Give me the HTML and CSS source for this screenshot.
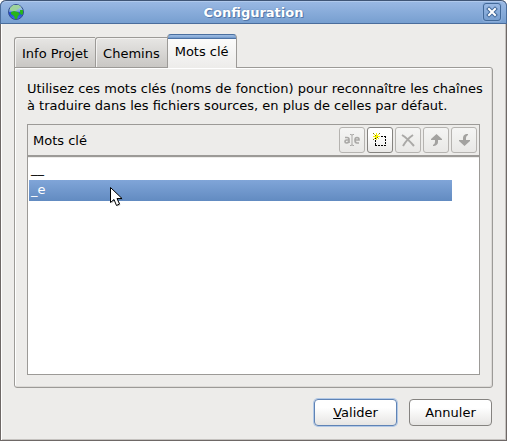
FILE: index.html
```html
<!DOCTYPE html>
<html lang="fr">
<head>
<meta charset="utf-8">
<title>Configuration</title>
<link rel="stylesheet" href="styles.css">
</head>
<body>
<div class="window">
  <header class="titlebar">
    <svg class="globe" width="18" height="18" viewBox="0 0 18 18" aria-hidden="true">
      <defs>
        <linearGradient id="sea" x1="0" y1="0" x2="0" y2="1">
          <stop offset="0" stop-color="#c3e0d8"/>
          <stop offset="0.45" stop-color="#7da9dd"/>
          <stop offset="0.55" stop-color="#1c43d8"/>
          <stop offset="1" stop-color="#4574ee"/>
        </linearGradient>
      </defs>
      <circle cx="9" cy="9" r="7.5" fill="url(#sea)" stroke="#33508e"/>
      <path d="M3 5l3-3h6l2 2-3 2-2 2H5L3 7z" fill="#9ed39c"/>
      <path d="M4 9l3-1 4 1 2 2-2 2-1 3H8l-1-3-3-2z" fill="#27b51c"/>
      <path d="M13 7l3 0v4l-2 1-1-2z" fill="#27b51c"/>
    </svg>
    <h1>Configuration</h1>
    <button class="close" type="button" aria-label="Fermer">
      <svg width="12" height="12" viewBox="0 0 12 12">
        <path d="M3 3l6 6M9 3L3 9" stroke="#426999" stroke-width="4" stroke-linecap="square"/>
        <path d="M3 3l6 6M9 3L3 9" stroke="#fff" stroke-width="2" stroke-linecap="square"/>
      </svg>
    </button>
  </header>

  <main class="content">
    <div class="tabs" role="tablist">
      <button class="tab" type="button" role="tab">Info Projet</button>
      <button class="tab" type="button" role="tab">Chemins</button>
      <button class="tab active" type="button" role="tab" aria-selected="true">Mots clé</button>
    </div>

    <section class="panel" role="tabpanel">
      <p>Utilisez ces mots clés (noms de fonction) pour reconnaître les chaînes<br>
      à traduire dans les fichiers sources, en plus de celles par défaut.</p>
      <div class="listbox">
        <div class="toolbar">
          <span id="list-label">Mots clé</span>
          <button class="tool" type="button" aria-label="Modifier" disabled>
            <svg width="18" height="18" viewBox="0 0 18 18" fill="none" stroke="#aaa9a7">
              <path d="M2 6.500h2q2 0 2 2V12M6 9H3.500Q2 9 2 10.500T3.500 12q1.500 0 2.500-1.500M12 9h4Q16 6.500 14 6.500T12 9Q12 12 14 12h2" stroke-width="1.700"/>
              <path d="M7 3.500h1q1 0 1 1v9q0 1-1 1H7M11 3.500h-1q-1 0-1 1M11 14.500h-1q-1 0-1-1"/>
            </svg>
          </button>
          <button class="tool" type="button" aria-label="Nouveau">
            <svg width="18" height="18" viewBox="0 0 18 18" shape-rendering="crispEdges">
              <path d="M4 5.500h11M14.500 5v10M4 14.500h11M4.500 6v9" fill="none" stroke="#000" stroke-dasharray="2 1"/>
              <path d="M5 2h1v2H5zM5 6h1v3H5zM2 5h7v1H2zM3 3h1v1H3zM7 3h1v1H7zM4 4h3v3H4zM7 7h1v1H7zM3 7h1v1H3z" fill="#f7f100"/>
              <path d="M2 2h1v1H2zM8 2h1v1H8zM4 4h1v1H4zM6 6h1v1H6zM2 8h1v1H2z" fill="#77731a"/>
            </svg>
          </button>
          <button class="tool" type="button" aria-label="Supprimer" disabled>
            <svg width="18" height="18" viewBox="0 0 18 18" fill="none" stroke="#aaa9a7">
              <path d="M3 4q5 3 12 11M14 4Q8 8 4 15" stroke-width="2"/>
            </svg>
          </button>
          <button class="tool" type="button" aria-label="Monter" disabled>
            <svg width="18" height="18" viewBox="0 0 18 18" fill="#a3a2a0">
              <path d="M9.500 3L15 8v1h-4v2q0 3-4 4H6v-1q2-1 2-3V9H4V8z"/>
            </svg>
          </button>
          <button class="tool" type="button" aria-label="Descendre" disabled>
            <svg width="18" height="18" viewBox="0 0 18 18" fill="#a3a2a0">
              <path d="M9.500 15L4 10V9h4V7q0-3 3-4h2v1q-2 1-2 3v2h4v1z"/>
            </svg>
          </button>
        </div>
        <ul class="items" role="listbox" aria-labelledby="list-label">
          <li role="option">__</li>
          <li class="selected" role="option" aria-selected="true">_e
            <svg class="pointer" width="14" height="22" viewBox="0 0 14 22" aria-hidden="true">
              <path d="M1.500 1.500v15l3.500-3 2.500 6 3-1.500-2.500-5.500h5z" fill="#000" opacity="0.25"/>
              <path d="M0.500 0.500v15l3.500-3 2.500 6 3-1.500L7 11.500h5z" fill="#fff" stroke="#000"/>
            </svg>
          </li>
        </ul>
      </div>
    </section>

    <footer class="actions">
      <button class="btn default" type="button"><u>V</u>alider</button>
      <button class="btn" type="button">Annuler</button>
    </footer>
  </main>
</div>
</body>
</html>
```
FILE: styles.css
```css
* { box-sizing: border-box; }
body {
  margin: 0;
  background: #fff;
  font: 13px/17px "DejaVu Sans", sans-serif;
  color: #000;
}
button { font: inherit; color: inherit; padding: 0; }
svg { display: block; }

.window {
  display: flex;
  flex-direction: column;
  min-height: 100vh;
  background: #edecea;
  border: 1px solid #6e6866;
  border-top: 0;
  border-radius: 6px 6px 0 0;
  box-shadow: inset 1px 0 #fff, inset -1px -1px #c5c2bf;
}

.titlebar {
  display: flex;
  align-items: center;
  height: 24px;
  margin: 0 -1px;
  padding: 0 5px 0 6px;
  border: 1px solid #4a6d9c;
  border-top-color: #3f5576;
  border-radius: 6px 6px 0 0;
  background: linear-gradient(#9ab9e4, #779fd0);
  box-shadow: inset 0 1px #b0c9ec;
}
.globe { margin-right: -1px; }
.titlebar h1 {
  flex: 1;
  margin: 0;
  font-size: 13px;
  text-align: center;
  color: #fff;
  text-shadow: 1px 1px #5477a8, 0 0 1px #486b9b;
}
.close {
  display: flex;
  align-items: center;
  justify-content: center;
  width: 18px;
  height: 18px;
  border: 1px solid #426999;
  border-radius: 3px;
  background: linear-gradient(#9ab9e4, #779fd0);
  box-shadow: 0 0 0 1px #8caedb;
}

.content {
  flex: 1;
  display: flex;
  flex-direction: column;
  padding: 10px 13px 14px;
}

.tabs {
  display: flex;
  align-items: flex-end;
  margin-bottom: -1px;
}
.tab {
  height: 31px;
  padding: 1px 7px 0;
  border: 1px solid #9c9a97;
  border-right-width: 0;
  border-radius: 3px 0 0 0;
  background: linear-gradient(#e7e6e4, #c9c7c4);
  box-shadow: inset 1px 1px #f3f2f1;
}
.tab.active {
  position: relative;
  height: 34px;
  padding: 0 7px;
  border-right-width: 1px;
  border-top-color: #4a6f9f;
  border-bottom: 0;
  border-radius: 4px 4px 0 0;
  background: linear-gradient(#98b8e0 0 1px, #6d96c9 3px, #4d73a5 3px 4px, #fbfbfb 4px, #edecea);
  box-shadow: none;
}

.panel {
  flex: 1;
  display: flex;
  flex-direction: column;
  padding: 12px;
  border: 1px solid #9c9a97;
  border-radius: 0 3px 3px 3px;
  box-shadow: inset 1px 1px #fff, inset -1px -1px #dcdad7;
}
.panel p { margin: 0 -10px 10px 0; }

.listbox {
  flex: 1;
  display: flex;
  flex-direction: column;
  border: 1px solid #9c9a97;
}
.toolbar {
  display: flex;
  align-items: center;
  gap: 2px;
  height: 32px;
  padding: 0 2px 0 5px;
  border-bottom: 2px solid #9c9a97;
}
.toolbar span { flex: 1; }
.tool {
  display: flex;
  align-items: center;
  justify-content: center;
  width: 26px;
  height: 26px;
  border: 1px solid #858380;
  border-radius: 3px;
  background: linear-gradient(#fff 30%, #e9e8e6);
}
.tool:disabled {
  border-color: #b5b3b0;
  background: linear-gradient(#f5f5f4, #e9e8e6);
}
.items {
  flex: 1;
  margin: 0;
  padding: 1px 27px 0 1px;
  list-style: none;
  background: #fff;
  border-top: 1px solid #edecea;
}
.items li {
  height: 21px;
  padding: 0 2px;
  line-height: 19px;
}
.items .selected {
  position: relative;
  color: #fff;
  background: linear-gradient(#80a5d8, #628bc1);
}
.pointer {
  position: absolute;
  left: 81px;
  top: 7px;
}

.actions {
  display: flex;
  justify-content: flex-end;
  gap: 12px;
  padding: 11px 1px 0 0;
}
.btn {
  width: 83px;
  height: 27px;
  border: 1px solid #858380;
  border-radius: 4px;
  background: linear-gradient(#fff 30%, #e6e5e3);
}
.btn.default {
  border-color: #5f83b5;
  box-shadow: 0 0 0 1px #b3c9e6;
}
```
